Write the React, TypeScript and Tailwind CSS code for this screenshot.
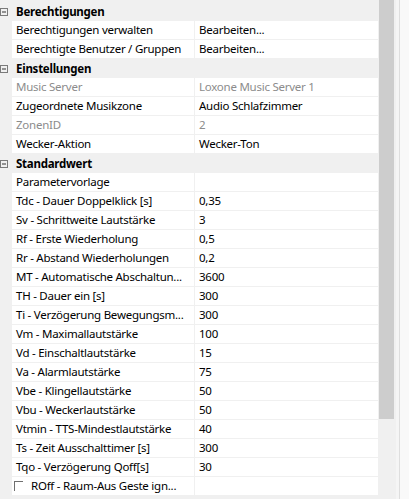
type Row =
  | { kind: "group"; label: string }
  | { kind: "item"; name: string; value?: string; muted?: boolean; checkbox?: boolean };

const rows: Row[] = [
  { kind: "group", label: "Berechtigungen" },
  { kind: "item", name: "Berechtigungen verwalten", value: "Bearbeiten..." },
  { kind: "item", name: "Berechtigte Benutzer / Gruppen", value: "Bearbeiten..." },
  { kind: "group", label: "Einstellungen" },
  { kind: "item", name: "Music Server", value: "Loxone Music Server 1", muted: true },
  { kind: "item", name: "Zugeordnete Musikzone", value: "Audio Schlafzimmer" },
  { kind: "item", name: "ZonenID", value: "2", muted: true },
  { kind: "item", name: "Wecker-Aktion", value: "Wecker-Ton" },
  { kind: "group", label: "Standardwert" },
  { kind: "item", name: "Parametervorlage", value: "" },
  { kind: "item", name: "Tdc - Dauer Doppelklick [s]", value: "0,35" },
  { kind: "item", name: "Sv - Schrittweite Lautstärke", value: "3" },
  { kind: "item", name: "Rf - Erste Wiederholung", value: "0,5" },
  { kind: "item", name: "Rr - Abstand Wiederholungen", value: "0,2" },
  { kind: "item", name: "MT - Automatische Abschaltun...", value: "3600" },
  { kind: "item", name: "TH - Dauer ein [s]", value: "300" },
  { kind: "item", name: "Ti - Verzögerung Bewegungsm...", value: "300" },
  { kind: "item", name: "Vm - Maximallautstärke", value: "100" },
  { kind: "item", name: "Vd - Einschaltlautstärke", value: "15" },
  { kind: "item", name: "Va - Alarmlautstärke", value: "75" },
  { kind: "item", name: "Vbe - Klingellautstärke", value: "50" },
  { kind: "item", name: "Vbu - Weckerlautstärke", value: "50" },
  { kind: "item", name: "Vtmin - TTS-Mindestlautstärke", value: "40" },
  { kind: "item", name: "Ts - Zeit Ausschalttimer [s]", value: "300" },
  { kind: "item", name: "Tqo - Verzögerung Qoff[s]", value: "30" },
  { kind: "item", name: "ROff - Raum-Aus Geste ign...", checkbox: true },
];

function CollapseGlyph() {
  return (
    <svg width="8" height="8" viewBox="0 0 8 8" className="block">
      <rect x="0.5" y="0.5" width="7" height="7" fill="none" stroke="#7a7a7a" />
      <line x1="2" y1="4" x2="6" y2="4" stroke="#333" />
    </svg>
  );
}

export default function App() {
  return (
    <div
      className="flex h-[499px] w-[409px] overflow-hidden bg-[#f9f9f9] text-[11.5px] tracking-[-0.25px] text-black"
      style={{ fontFamily: '"Noto Sans", "Open Sans", sans-serif' }}
    >
      <div className="w-[378px] bg-[#f0f0f0] pt-[2px]">
        {rows.map((row, i) =>
          row.kind === "group" ? (
            <div key={i} className="flex h-[19px] items-center">
              <div className="flex w-[12px] items-center">
                <CollapseGlyph />
              </div>
              <span className="pl-[4px] font-bold leading-none">{row.label}</span>
            </div>
          ) : (
            <div key={i} className="flex h-[19px]">
              <div className="w-[12px] shrink-0" />
              <div className="flex w-[182px] shrink-0 items-center overflow-hidden whitespace-nowrap border-b border-[#f0f0f0] bg-white pl-[4px]">
                {row.checkbox && (
                  <span className="mr-[8px] -ml-[2px] h-[10px] w-[9px] shrink-0 border-l border-t border-[#6f6f6f]" />
                )}
                <span className={`leading-none ${row.muted ? "text-[#8c8c8c]" : ""}`}>{row.name}</span>
              </div>
              <div className="w-[1px] shrink-0" />
              <div className="flex flex-1 items-center overflow-hidden whitespace-nowrap border-b border-[#f0f0f0] bg-white pl-[4px]">
                <span className={`leading-none ${row.muted ? "text-[#8c8c8c]" : ""}`}>{row.value}</span>
              </div>
            </div>
          ),
        )}
      </div>
      <div className="flex w-[18px] flex-col bg-[#f0f0f0] pl-[1px]">
        <div className="h-[419px] w-[15px] bg-[#cdcdcd]" />
      </div>
      <div className="w-[3px] bg-[#f5f5f5]" />
      <div className="w-[1px] bg-[#dedede]" />
      <div className="flex-1 bg-[#f9f9f9]" />
    </div>
  );
}
